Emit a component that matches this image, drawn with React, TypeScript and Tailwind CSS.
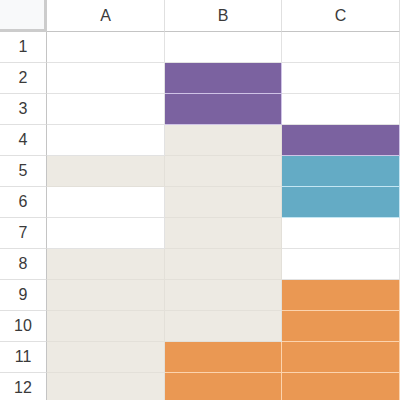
import React from "react";

type C = "w" | "g" | "p" | "b" | "o";

const rows: C[][] = [
  ["w", "w", "w"],
  ["w", "p", "w"],
  ["w", "p", "w"],
  ["w", "g", "p"],
  ["g", "g", "b"],
  ["w", "g", "b"],
  ["w", "g", "w"],
  ["g", "g", "w"],
  ["g", "g", "o"],
  ["g", "g", "o"],
  ["g", "o", "o"],
  ["g", "o", "o"],
];

const cls: Record<C, string> = {
  w: "bg-white border-[#e2e2e2]",
  g: "bg-[#edeae3] border-[#e3e0d9]",
  p: "bg-[#7b62a0] border-[#cfc3e6]",
  b: "bg-[#64abc5] border-[#c4e6f3]",
  o: "bg-[#ea9853] border-[#fcd3ad]",
};

export default function App() {
  return (
    <div
      className="w-[400px] h-[400px] overflow-hidden bg-white text-[#3a3a3a]"
      style={{ fontFamily: "'Liberation Sans', Arial, sans-serif" }}
    >
      <div className="grid grid-cols-[47px_118px_117px_118px] grid-rows-[32px_repeat(12,31px)]">
        <div className="bg-[#f8f9fa] border-r-[3px] border-b-[3px] border-[#cccccc]" />
        {["A", "B", "C"].map((h) => (
          <div
            key={h}
            className="flex items-center justify-center text-[16px] bg-white border-r border-b border-r-[#e0e0e0] border-b-[#c4c4c4]"
          >
            {h}
          </div>
        ))}
        {rows.map((r, i) => (
          <React.Fragment key={i}>
            <div className="flex items-center justify-center text-[16px] bg-white border-r border-b border-r-[#c4c4c4] border-b-[#e0e0e0]">
              {i + 1}
            </div>
            {r.map((c, j) => (
              <div key={j} className={`border-r border-b ${cls[c]}`} />
            ))}
          </React.Fragment>
        ))}
      </div>
    </div>
  );
}
